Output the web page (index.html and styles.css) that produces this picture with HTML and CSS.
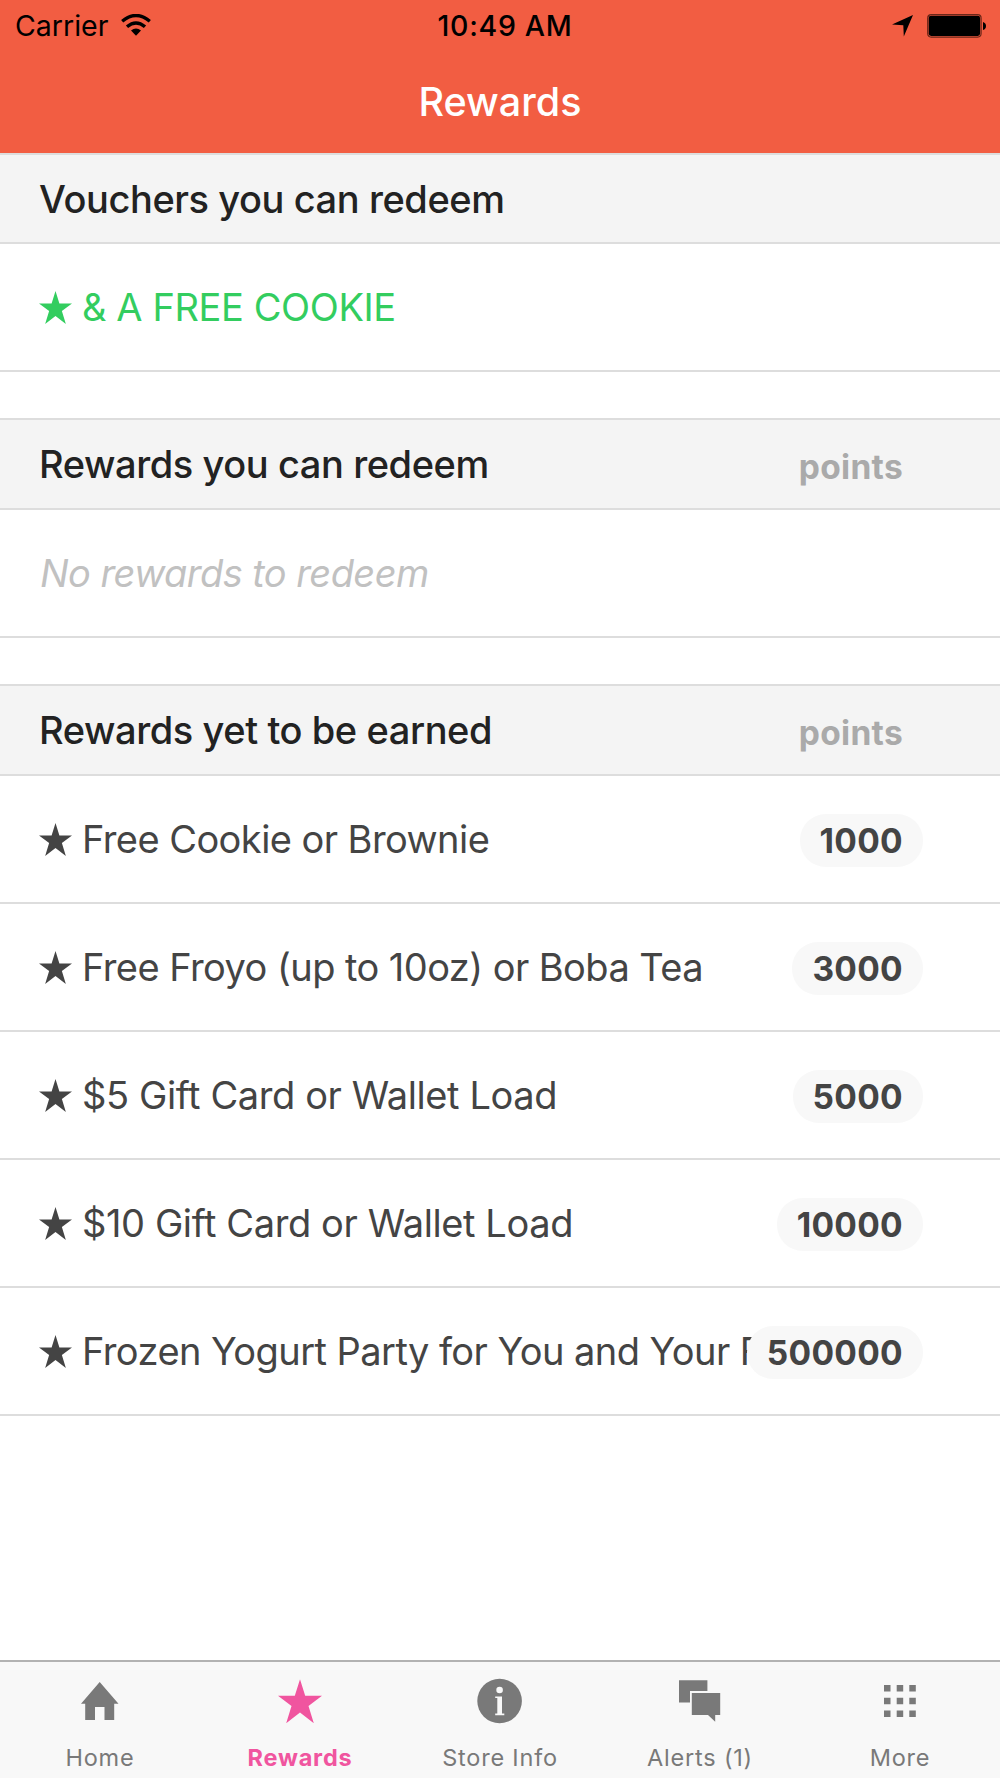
FILE: index.html
```html
<!DOCTYPE html>
<html lang="en">
<head>
  <meta charset="UTF-8">
  <title>Rewards</title>
  <meta name="viewport" content="width=device-width, initial-scale=1.0">
  <link rel="stylesheet" href="styles.css">
</head>
<body>
  <svg class="sprite" width="0" height="0">
    <symbol id="star" viewBox="0 0 44 44">
      <path d="M22 0 L27.2 16.5 H44 L30.5 26.8 L35.8 44 L22 33.4 L8.2 44 L13.5 26.8 L0 16.5 H16.8 Z"/>
    </symbol>
  </svg>

  <!-- Status bar + title -->
  <header class="header">
    <div class="status-bar">
      <div class="status-left">
        <span class="carrier">Carrier</span>
        <svg class="wifi" width="30" height="23" viewBox="0 0 30 23">
          <path d="M1.2 7.2 Q15 -4.2 28.8 7.2" fill="none" stroke="#000" stroke-width="3.4"/>
          <path d="M6 12.8 Q15 5 24 12.8" fill="none" stroke="#000" stroke-width="3.4"/>
          <path d="M10 16.6 Q15 12.2 20 16.6 L15 21.8 Z"/>
        </svg>
      </div>
      <span class="time">10:49 AM</span>
      <div class="status-right">
        <svg class="location" width="21" height="22" viewBox="0 0 21 22">
          <path d="M21 0 L11.8 21.5 L11.3 10.2 L0 9.6 Z"/>
        </svg>
        <svg class="battery" width="60" height="24" viewBox="0 0 60 24">
          <rect x="0.7" y="0.7" width="53.4" height="22.4" rx="3.5" fill="none" stroke="#6b2618" stroke-width="1.2"/>
          <rect x="1.7" y="1.7" width="51.4" height="20.2" rx="2.4"/>
          <path d="M56 8 Q59 9 59 12 Q59 15 56 16 Z"/>
        </svg>
      </div>
    </div>
    <h1>Rewards</h1>
  </header>

  <main>
    <section class="vouchers">
      <div class="section-header"><h2>Vouchers you can redeem</h2></div>
      <div class="row voucher">
        <svg class="star"><use href="#star"/></svg>
        <span class="label">&amp; A FREE COOKIE</span>
      </div>
    </section>

    <section>
      <div class="section-header"><h2>Rewards you can redeem</h2><span class="points">points</span></div>
      <div class="row"><em class="empty">No rewards to redeem</em></div>
    </section>

    <section>
      <div class="section-header"><h2>Rewards yet to be earned</h2><span class="points">points</span></div>
      <div class="row">
        <svg class="star"><use href="#star"/></svg>
        <span class="label">Free Cookie or Brownie</span>
        <span class="badge">1000</span>
      </div>
      <div class="row">
        <svg class="star"><use href="#star"/></svg>
        <span class="label">Free Froyo (up to 10oz) or Boba Tea</span>
        <span class="badge">3000</span>
      </div>
      <div class="row gift">
        <svg class="star"><use href="#star"/></svg>
        <span class="label">$5 Gift Card or Wallet Load</span>
        <span class="badge">5000</span>
      </div>
      <div class="row gift">
        <svg class="star"><use href="#star"/></svg>
        <span class="label">$10 Gift Card or Wallet Load</span>
        <span class="badge">10000</span>
      </div>
      <div class="row">
        <svg class="star"><use href="#star"/></svg>
        <span class="label">Frozen Yogurt Party for You and Your F</span>
        <span class="badge">500000</span>
      </div>
    </section>
  </main>

  <!-- Bottom tabs -->
  <nav class="tabs">
    <a class="tab">
      <svg width="50" height="50" viewBox="0 0 50 50">
        <path d="M24.7 6 L43.5 27.7 H39.2 V44 H29.5 V31 H20 V44 H10.2 V27.7 H6 Z"/>
      </svg>
      <span>Home</span>
    </a>
    <a class="tab active">
      <svg width="50" height="50" viewBox="0 0 50 50"><use href="#star" x="3" y="3.2" width="44" height="44"/></svg>
      <span>Rewards</span>
    </a>
    <a class="tab">
      <svg width="50" height="50" viewBox="0 0 50 50">
        <circle cx="24.6" cy="25" r="22.3"/>
        <g fill="#f8f8f8">
          <circle cx="24.6" cy="14" r="3.3"/>
          <path d="M20.2 20.4 H27 V37.6 H29.3 V39.2 H20.2 V37.6 H22.3 V22 H20.2 Z"/>
        </g>
      </svg>
      <span>Store Info</span>
    </a>
    <a class="tab">
      <svg width="50" height="50" viewBox="0 0 50 50">
        <path d="M4 4.2 H32.4 V15 H15 V26.4 H4 Z"/>
        <path d="M16.8 17 H45.2 V39 H40.2 V45.8 L33 39 H16.8 Z"/>
      </svg>
      <span>Alerts (1)</span>
    </a>
    <a class="tab">
      <svg width="50" height="50" viewBox="0 0 50 50">
        <path d="M9 9h6.5v6.5H9z M21.7 9h6.5v6.5h-6.5z M34.3 9h6.5v6.5h-6.5z M9 21.7h6.5v6.5H9z M21.7 21.7h6.5v6.5h-6.5z M34.3 21.7h6.5v6.5h-6.5z M9 34.4h6.5v6.5H9z M21.7 34.4h6.5v6.5h-6.5z M34.3 34.4h6.5v6.5h-6.5z"/>
      </svg>
      <span>More</span>
    </a>
  </nav>
</body>
</html>
```
FILE: styles.css
```css
* { box-sizing: border-box; margin: 0; padding: 0; }
body {
  font-family: Inter, 'Liberation Sans', sans-serif;
  background: #fff;
  color: #444;
  height: 1778px;
  display: flex;
  flex-direction: column;
  overflow: hidden;
}
.sprite {
  position: absolute;
}
.header {
  height: 153px;
  background: #f25d42;
}
.status-bar {
  height: 50px;
  padding: 0 13px 0 15px;
  display: grid;
  grid-template-columns: 1fr auto 1fr;
  align-items: center;
  color: #000;
  font-size: 28.5px;
  line-height: 51px;
}
.status-left, .status-right {
  display: flex;
  align-items: center;
}
.status-right {
  justify-content: flex-end;
  gap: 14px;
}
.wifi {
  margin-left: 13px;
}
.time {
  font-weight: 500;
  letter-spacing: 0.7px;
  margin-left: 8px;
}
h1 {
  height: 103px;
  line-height: 105px;
  text-align: center;
  font-size: 39.5px;
  font-weight: 500;
  color: #fff;
}
main {
  flex: 1;
}
section {
  margin-bottom: 46px;
}
.section-header {
  height: 92px;
  padding: 0 97px 0 39px;
  display: flex;
  align-items: center;
  justify-content: space-between;
  background: #f4f4f4;
  border-top: 2px solid #ddd;
  border-bottom: 2px solid #ddd;
}
.vouchers .section-header {
  height: 91px;
}
h2 {
  font-size: 38px;
  font-weight: 500;
  letter-spacing: -0.42px;
  color: #222;
}
.points {
  padding-top: 5px;
  font-size: 33.5px;
  font-weight: 700;
  letter-spacing: 0.3px;
  color: #aaa;
}
.row {
  position: relative;
  height: 128px;
  padding: 0 40px;
  display: flex;
  align-items: center;
  border-bottom: 2px solid #ddd;
  font-size: 38px;
  letter-spacing: -0.56px;
}
.gift, .voucher {
  letter-spacing: -0.4px;
}
.star {
  flex: none;
  width: 33px;
  height: 33px;
  margin: 0 10px 0 -1px;
  fill: currentColor;
}
.label {
  white-space: nowrap;
}
.voucher {
  color: #33cd5f;
}
.empty {
  color: #c1c1c1;
}
.badge {
  position: absolute;
  top: 38px;
  right: 77px;
  height: 53px;
  padding: 0 20px;
  border-radius: 26px;
  background: #f8f8f8;
  font-size: 33.5px;
  font-weight: 700;
  letter-spacing: 0.3px;
  line-height: 55px;
}
.tabs {
  height: 118px;
  display: grid;
  grid-template-columns: repeat(5, 1fr);
  background: #f8f8f8;
  border-top: 2px solid #b2b2b2;
}
.tab {
  display: flex;
  flex-direction: column;
  align-items: center;
  padding-top: 14px;
  color: #797979;
  font-size: 23.5px;
  letter-spacing: 0.8px;
}
.tab svg {
  fill: currentColor;
}
.tab span {
  margin-top: 17px;
  line-height: 30px;
}
.active {
  color: #f0559f;
  font-weight: 700;
}
```
